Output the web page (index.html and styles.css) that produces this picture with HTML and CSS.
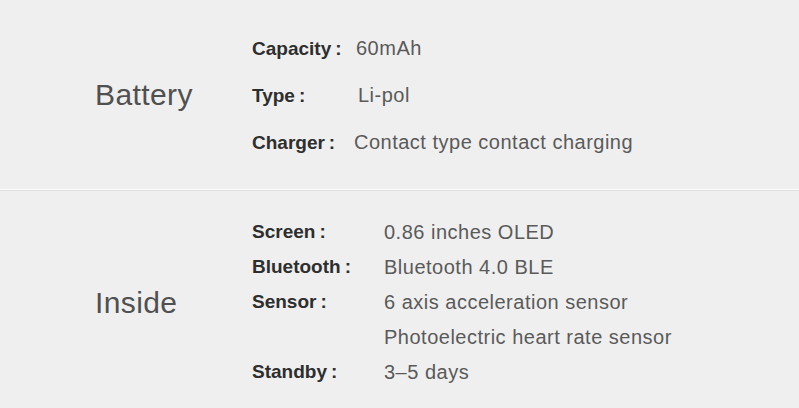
FILE: index.html
```html
<!DOCTYPE html>
<html>
<head>
<meta charset="utf-8">
<link rel="stylesheet" href="styles.css">
</head>
<body>
<section class="spec spec-battery">
  <h2 class="spec-title">Battery</h2>
  <dl class="spec-list list-battery">
    <div class="row"><dt>Capacity<span class="colon">:</span></dt><dd>60mAh</dd></div>
    <div class="row"><dt>Type<span class="colon">:</span></dt><dd class="shift">Li-pol</dd></div>
    <div class="row"><dt>Charger<span class="colon">:</span></dt><dd class="back">Contact type contact charging</dd></div>
  </dl>
</section>
<section class="spec spec-inside">
  <h2 class="spec-title">Inside</h2>
  <dl class="spec-list list-inside">
    <div class="row"><dt>Screen<span class="colon">:</span></dt><dd>0.86 inches OLED</dd></div>
    <div class="row"><dt>Bluetooth<span class="colon">:</span></dt><dd>Bluetooth 4.0 BLE</dd></div>
    <div class="row"><dt>Sensor<span class="colon">:</span></dt><dd>6 axis acceleration sensor</dd></div>
    <div class="row"><dt></dt><dd>Photoelectric heart rate sensor</dd></div>
    <div class="row"><dt>Standby<span class="colon">:</span></dt><dd>3–5 days</dd></div>
  </dl>
</section>
</body>
</html>
```
FILE: styles.css
```css
html, body {
  margin: 0;
  padding: 0;
  background: #efefef;
}
body {
  width: 799px;
  height: 408px;
  overflow: hidden;
  font-family: "Liberation Sans", "Noto Sans CJK SC", sans-serif;
}
.spec {
  display: flex;
  align-items: center;
  box-sizing: border-box;
  padding-left: 95px;
}
.spec-battery {
  height: 190px;
  padding-top: 1px;
  border-bottom: 1px solid #fbfbfb;
}
.spec-inside {
  height: 218px;
  padding-top: 4px;
  border-top: 1px solid #e1e1e1;
}
.spec-title {
  margin: 0;
  width: 157px;
  font-size: 30px;
  font-weight: 400;
  color: #505050;
  letter-spacing: 0.4px;
}
.spec-inside .spec-title {
  padding-top: 2px;
}
.spec-list {
  margin: 0;
  display: flex;
  flex-direction: column;
}
.row {
  display: flex;
  line-height: 1;
}
.list-battery .row { height: 47px; align-items: center; }
.list-inside .row { height: 35px; align-items: center; }
dt {
  font-size: 19px;
  font-weight: 700;
  color: #2e2e2e;
}
.colon {
  margin-left: 4px;
}
dd {
  margin: 0;
  font-size: 20px;
  color: #5a5a5a;
  letter-spacing: 0.5px;
}
.list-battery dt { width: 104px; }
.list-inside dt { width: 132px; }
.shift { margin-left: 2px; }
.back { margin-left: -2px; }
```
